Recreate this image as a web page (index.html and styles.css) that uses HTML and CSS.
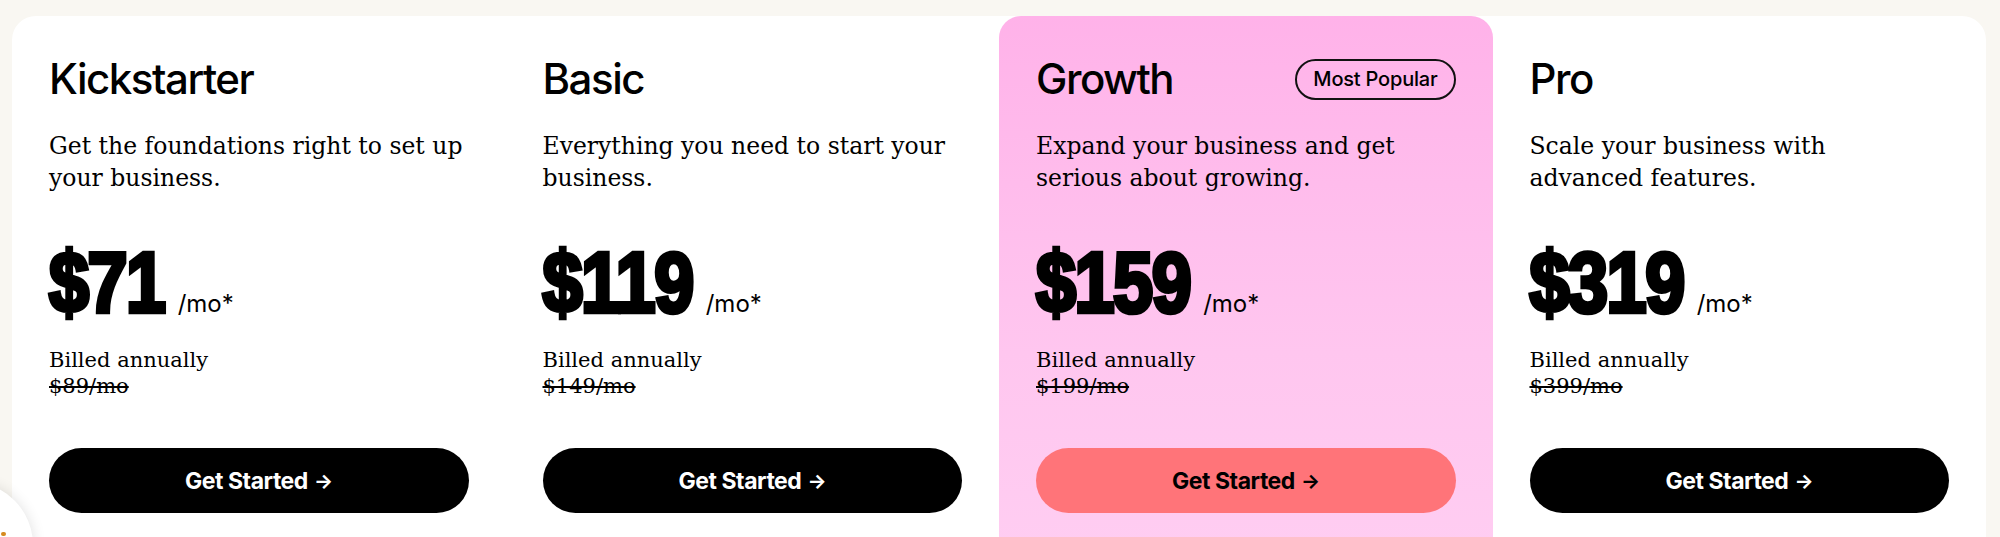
FILE: index.html
```html
<!DOCTYPE html>
<html lang="en">
<head>
<meta charset="utf-8">
<title>Pricing</title>
<link rel="stylesheet" href="styles.css">
</head>
<body>
<div class="page">
  <section class="plans">
    <article class="plan">
      <div class="plan-head"><h2 class="plan-name">Kickstarter</h2></div>
      <p class="plan-desc">Get the foundations right to set up<br>your business.</p>
      <div class="price-row"><span class="price">$71</span><span class="per">/mo*</span></div>
      <p class="billing">Billed annually<br><s>$89/mo</s></p>
      <a class="cta" href="#">Get Started <span class="arrow">→</span></a>
    </article>
    <article class="plan">
      <div class="plan-head"><h2 class="plan-name">Basic</h2></div>
      <p class="plan-desc">Everything you need to start your<br>business.</p>
      <div class="price-row"><span class="price">$119</span><span class="per">/mo*</span></div>
      <p class="billing">Billed annually<br><s>$149/mo</s></p>
      <a class="cta" href="#">Get Started <span class="arrow">→</span></a>
    </article>
    <article class="plan plan-featured">
      <div class="plan-head"><h2 class="plan-name">Growth</h2><span class="badge">Most Popular</span></div>
      <p class="plan-desc">Expand your business and get<br>serious about growing.</p>
      <div class="price-row"><span class="price">$159</span><span class="per">/mo*</span></div>
      <p class="billing">Billed annually<br><s>$199/mo</s></p>
      <a class="cta cta-featured" href="#">Get Started <span class="arrow">→</span></a>
    </article>
    <article class="plan">
      <div class="plan-head"><h2 class="plan-name">Pro</h2></div>
      <p class="plan-desc">Scale your business with<br>advanced features.</p>
      <div class="price-row"><span class="price">$319</span><span class="per">/mo*</span></div>
      <p class="billing">Billed annually<br><s>$399/mo</s></p>
      <a class="cta" href="#">Get Started <span class="arrow">→</span></a>
    </article>
  </section>
  <div class="chat-bubble"><span class="chat-dot"></span></div>
</div>
</body>
</html>
```
FILE: styles.css
```css
* { box-sizing: border-box; }
html, body {
  margin: 0;
  padding: 0;
}
body {
  background: #f9f7f2;
  height: 537px;
  overflow: hidden;
  color: #000;
}
.page {
  position: relative;
  height: 537px;
  padding: 16px 14px 0 12px;
}
.plans {
  display: grid;
  grid-template-columns: repeat(4, 1fr);
  background: #ffffff;
  border-radius: 24px 24px 0 0;
  height: 560px;
}
.plan {
  display: flex;
  flex-direction: column;
  padding: 38px 37px 0 37px;
  border-radius: 22px 22px 0 0;
}
.plan-featured {
  background: linear-gradient(180deg, #ffb2e9 0%, #ffc6ef 60%, #ffcef2 100%);
}
.plan-head {
  display: flex;
  align-items: center;
  justify-content: space-between;
  height: 50px;
}
.plan-name {
  margin: 0;
  font-family: Inter, "Liberation Sans", sans-serif;
  font-weight: 500;
  font-size: 42px;
  line-height: 50px;
  letter-spacing: -0.035em;
}
.badge {
  font-family: Inter, "Liberation Sans", sans-serif;
  font-weight: 500;
  font-size: 20px;
  line-height: 37px;
  height: 41px;
  padding: 0 16px;
  border: 2px solid #111;
  border-radius: 999px;
  letter-spacing: -0.01em;
}
.plan-desc {
  margin: 27px 0 0 0;
  font-family: "DejaVu Serif", "Liberation Serif", serif;
  font-size: 23.5px;
  line-height: 31.5px;
  white-space: nowrap;
}
.price-row {
  display: flex;
  align-items: baseline;
  gap: 13px;
  margin-top: 57px;
}
.price {
  display: inline-block;
  font-family: "Liberation Sans", Arial, sans-serif;
  font-weight: 700;
  font-size: 72px;
  line-height: 72px;
  letter-spacing: -1.5px;
  -webkit-text-stroke: 4px #000;
  transform: scaleY(1.18);
  transform-origin: 0 61px;
}
.per {
  font-family: Inter, "Liberation Sans", sans-serif;
  font-weight: 400;
  font-size: 24px;
}
.billing {
  margin: 24px 0 0 0;
  font-family: "DejaVu Serif", "Liberation Serif", serif;
  font-size: 21px;
  line-height: 26px;
}
.billing s {
  text-decoration-thickness: 1.5px;
}
.cta {
  display: flex;
  align-items: center;
  justify-content: center;
  gap: 6px;
  margin-top: 49px;
  height: 65px;
  border-radius: 999px;
  background: #000;
  color: #fff;
  text-decoration: none;
  font-family: Inter, "Liberation Sans", sans-serif;
  font-weight: 700;
  font-size: 23px;
  letter-spacing: -0.02em;
}
.cta-featured {
  background: #ff7479;
  color: #000;
}
.arrow {
  font-size: 20px;
  font-weight: 700;
}
.chat-bubble {
  position: absolute;
  left: -93px;
  top: 482px;
  width: 126px;
  height: 126px;
  border-radius: 50%;
  background: #fff;
  box-shadow: 0 0 14px rgba(0, 0, 0, 0.12);
}
.chat-dot {
  position: absolute;
  right: 27px;
  top: 50px;
  width: 5px;
  height: 4px;
  border-radius: 2px;
  background: #d58a1e;
}
```
